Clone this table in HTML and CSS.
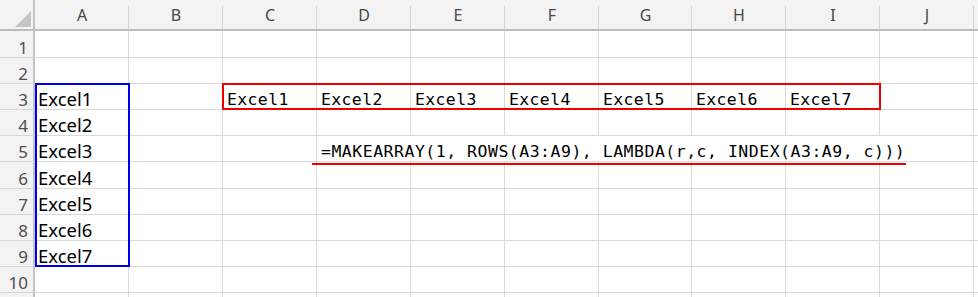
FILE: index.html
```html
<!DOCTYPE html>
<html>
<head>
<meta charset="utf-8">
<link rel="stylesheet" href="styles.css">
</head>
<body>
<div class="sheet">
  <div class="grid">
    <div class="corner"><svg class="tri" width="35" height="31" viewBox="0 0 35 31"><polygon points="15,27 31,27 31,11" fill="#c4c4c4"/></svg></div>
    <div class="colh">A</div><div class="colh">B</div><div class="colh">C</div><div class="colh">D</div><div class="colh">E</div><div class="colh">F</div><div class="colh">G</div><div class="colh">H</div><div class="colh">I</div><div class="colh">J</div><div class="colh"></div>

    <div class="rowh">1</div><div class="cell"></div><div class="cell"></div><div class="cell"></div><div class="cell"></div><div class="cell"></div><div class="cell"></div><div class="cell"></div><div class="cell"></div><div class="cell"></div><div class="cell"></div><div class="cell"></div>
    <div class="rowh">2</div><div class="cell"></div><div class="cell"></div><div class="cell"></div><div class="cell"></div><div class="cell"></div><div class="cell"></div><div class="cell"></div><div class="cell"></div><div class="cell"></div><div class="cell"></div><div class="cell"></div>
    <div class="rowh">3</div><div class="cell">Excel1</div><div class="cell"></div><div class="cell mono">Excel1</div><div class="cell mono">Excel2</div><div class="cell mono">Excel3</div><div class="cell mono">Excel4</div><div class="cell mono">Excel5</div><div class="cell mono">Excel6</div><div class="cell mono">Excel7</div><div class="cell"></div><div class="cell"></div>
    <div class="rowh">4</div><div class="cell">Excel2</div><div class="cell"></div><div class="cell"></div><div class="cell"></div><div class="cell"></div><div class="cell"></div><div class="cell"></div><div class="cell"></div><div class="cell"></div><div class="cell"></div><div class="cell"></div>
    <div class="rowh">5</div><div class="cell">Excel3</div><div class="cell"></div><div class="cell"></div><div class="cell mono formula">=MAKEARRAY(1, ROWS(A3:A9), LAMBDA(r,c, INDEX(A3:A9, c)))</div><div class="cell"></div>
    <div class="rowh">6</div><div class="cell">Excel4</div><div class="cell"></div><div class="cell"></div><div class="cell"></div><div class="cell"></div><div class="cell"></div><div class="cell"></div><div class="cell"></div><div class="cell"></div><div class="cell"></div><div class="cell"></div>
    <div class="rowh">7</div><div class="cell">Excel5</div><div class="cell"></div><div class="cell"></div><div class="cell"></div><div class="cell"></div><div class="cell"></div><div class="cell"></div><div class="cell"></div><div class="cell"></div><div class="cell"></div><div class="cell"></div>
    <div class="rowh">8</div><div class="cell">Excel6</div><div class="cell"></div><div class="cell"></div><div class="cell"></div><div class="cell"></div><div class="cell"></div><div class="cell"></div><div class="cell"></div><div class="cell"></div><div class="cell"></div><div class="cell"></div>
    <div class="rowh">9</div><div class="cell">Excel7</div><div class="cell"></div><div class="cell"></div><div class="cell"></div><div class="cell"></div><div class="cell"></div><div class="cell"></div><div class="cell"></div><div class="cell"></div><div class="cell"></div><div class="cell"></div>
    <div class="rowh">10</div><div class="cell"></div><div class="cell"></div><div class="cell"></div><div class="cell"></div><div class="cell"></div><div class="cell"></div><div class="cell"></div><div class="cell"></div><div class="cell"></div><div class="cell"></div><div class="cell"></div>
    <div class="rowh"></div><div class="cell"></div><div class="cell"></div><div class="cell"></div><div class="cell"></div><div class="cell"></div><div class="cell"></div><div class="cell"></div><div class="cell"></div><div class="cell"></div><div class="cell"></div><div class="cell"></div>
  </div>
  <div class="mark blue-box"></div>
  <div class="mark red-box"></div>
  <div class="mark red-line"></div>
</div>
</body>
</html>
```
FILE: styles.css
```css
html, body {
  margin: 0;
  padding: 0;
  background: #ffffff;
  overflow: hidden;
}
.sheet {
  position: relative;
  width: 978px;
  height: 297px;
  overflow: hidden;
}
.grid {
  display: grid;
  grid-template-columns: 35px repeat(6, 94px) 93px repeat(3, 94px) 1fr;
  grid-template-rows: 31px 27px 26px 26px 26px 26px 27px 26px 26px 26px 26px 26px;
}
.corner {
  background: #f3f3f3;
  border-right: 2px solid #c2c2c2;
  border-bottom: 2px solid #bdbdbd;
  box-sizing: border-box;
  position: relative;
}
.tri {
  position: absolute;
  left: 0;
  top: 0;
}
.colh {
  box-sizing: border-box;
  background: linear-gradient(#d6d6d6, #d6d6d6) no-repeat right bottom / 1px calc(100% - 6px), #f3f3f3;
  border-bottom: 2px solid #bdbdbd;
  font-family: "Noto Sans", sans-serif;
  font-size: 16px;
  color: #474747;
  display: flex;
  align-items: center;
  justify-content: center;
  padding-top: 1px;
}
.rowh {
  box-sizing: border-box;
  background: #f3f3f3;
  border-right: 2px solid #c2c2c2;
  border-bottom: 1px solid #d6d6d6;
  font-family: "Noto Sans", sans-serif;
  font-size: 17px;
  line-height: 19px;
  color: #4f4f4f;
  display: flex;
  align-items: flex-end;
  justify-content: flex-end;
  padding-right: 5px;
}
.cell {
  box-sizing: border-box;
  border-right: 1px solid #dadada;
  border-bottom: 1px solid #dadada;
  font-family: "Noto Sans", sans-serif;
  font-size: 18.5px;
  line-height: 20px;
  color: #000;
  padding: 0 3px 0 3px;
  display: flex;
  align-items: flex-end;
  white-space: nowrap;
}
.mono {
  font-family: "DejaVu Sans Mono", monospace;
  font-size: 16.5px;
  line-height: 16px;
  letter-spacing: 0.35px;
  padding-left: 4px;
  padding-bottom: 1px;
}
.formula {
  grid-column: span 7;
  letter-spacing: 0.5px;
}
.mark {
  position: absolute;
  box-sizing: border-box;
}
.blue-box {
  left: 35px;
  top: 83px;
  width: 95px;
  height: 184px;
  border: 2px solid #0000f0;
}
.red-box {
  left: 222px;
  top: 83px;
  width: 659px;
  height: 27px;
  border: 2px solid #ee0000;
}
.red-line {
  left: 312px;
  top: 163px;
  width: 594px;
  height: 2px;
  background: #ee0000;
}
```
